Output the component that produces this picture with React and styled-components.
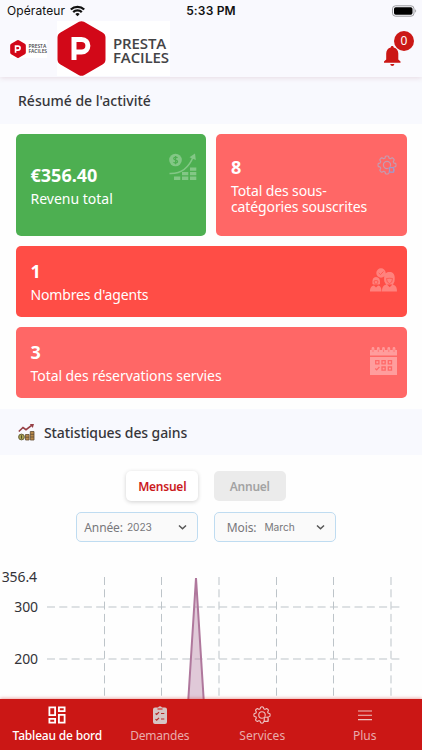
import React from 'react';
import styled, { createGlobalStyle } from 'styled-components';

const GlobalStyle = createGlobalStyle`
  *, *::before, *::after { box-sizing: border-box; }
  html, body { margin: 0; padding: 0; background: #fff; overflow: hidden; }
  body { font-family: "Noto Sans", sans-serif; color: #36363a; }
  svg { display: block; flex: none; }
`;

const Screen = styled.div`
  display: flex;
  flex-direction: column;
  width: 422px;
  height: 750px;
  overflow: hidden;
  background: #fefefe;
`;

const Header = styled.header`
  flex: none;
  height: 77px;
  background: #f9f9fe;
  box-shadow: 0 1px 5px rgba(150, 60, 80, 0.16);
  z-index: 1;
`;

const StatusBar = styled.div`
  display: grid;
  grid-template-columns: 1fr auto 1fr;
  align-items: center;
  height: 21px;
  padding: 0 7px;
  font-family: Inter, sans-serif;
  font-size: 12px;
  line-height: 21px;
  color: #111;
`;

const Carrier = styled.div`
  display: flex;
  align-items: center;
  gap: 5px;
  letter-spacing: 0.1px;
`;

const Clock = styled.div`
  font-weight: 600;
  letter-spacing: 0.17px;
`;

const BatteryWrap = styled.div`
  display: flex;
  justify-content: flex-end;
  margin-right: -2px;
`;

const BrandBar = styled.div`
  display: flex;
  align-items: center;
  height: 55px;
  padding: 0 7px 0 10px;
`;

const LogoTile = styled.div`
  display: flex;
  align-items: center;
  background: #fff;
  flex: none;
  width: ${(p) => (p.$small ? 37 : 113)}px;
  height: ${(p) => (p.$small ? 18 : 55)}px;
  margin-left: ${(p) => (p.$small ? 0 : 10)}px;
  gap: ${(p) => (p.$small ? 2.5 : 7)}px;
`;

const LogoWords = styled.div`
  font-family: "Open Sans", sans-serif;
  font-weight: 600;
  font-size: ${(p) => (p.$small ? 5 : 15)}px;
  line-height: ${(p) => (p.$small ? 4.5 : 14)}px;
  letter-spacing: ${(p) => (p.$small ? -0.05 : -0.13)}px;
  color: #444446;
  margin-top: ${(p) => (p.$small ? 0 : 3)}px;
`;

const BellButton = styled.button`
  position: relative;
  margin-left: auto;
  width: 32px;
  height: 36px;
  padding: 14px 0 0 1px;
  border: 0;
  background: none;
`;

const BellBadge = styled.span`
  position: absolute;
  top: 0;
  right: 1px;
  width: 20px;
  height: 20px;
  border-radius: 50%;
  background: #cb1816;
  color: #fff;
  font: 400 12px/20px "Noto Sans", sans-serif;
  text-align: center;
`;

const SectionTitle = styled.h2`
  flex: none;
  display: flex;
  align-items: center;
  gap: ${(p) => p.$gap || 0}px;
  height: ${(p) => p.$height}px;
  margin: 0;
  padding: 0 18px ${(p) => p.$lift || 0}px;
  background: #f8f9fe;
  font-size: 14px;
  font-weight: 500;
  letter-spacing: ${(p) => p.$tracking || 0}px;
`;

const CardGrid = styled.section`
  flex: none;
  display: grid;
  grid-template-columns: 1fr 1fr;
  grid-template-rows: 102px 71px 71px;
  gap: 10px;
  padding: 10px 15.5px 11px;
`;

const Card = styled.article`
  display: flex;
  justify-content: space-between;
  align-items: ${(p) => (p.$wide ? 'center' : 'flex-start')};
  grid-column: ${(p) => (p.$wide ? 'span 2' : 'auto')};
  padding: 0 9px 0 15px;
  border-radius: 5px;
  background: ${(p) => p.$color};
  color: #fff;
`;

const CardText = styled.div`
  align-self: center;
`;

const CardValue = styled.div`
  font-size: 18px;
  font-weight: 700;
  line-height: 24px;
  margin-bottom: 4px;
`;

const CardLabel = styled.div`
  font-size: 14px;
  line-height: 16.5px;
  letter-spacing: ${(p) => p.$tracking || 0}px;
  white-space: pre-line;
`;

const CardIcon = styled.div`
  padding: ${(p) => p.$pad};
`;

const Controls = styled.div`
  flex: none;
  display: grid;
  grid-template-columns: 122px 122px;
  justify-content: center;
  column-gap: 15.5px;
  row-gap: 11px;
  padding: 16px 10px 0 0;
`;

const Toggle = styled.button`
  width: 72px;
  height: 30px;
  padding: 0;
  border: 0;
  border-radius: 5px;
  justify-self: ${(p) => (p.$active ? 'end' : 'start')};
  background: ${(p) => (p.$active ? '#fff' : '#ebebeb')};
  box-shadow: ${(p) => (p.$active ? '0 1px 4px rgba(0, 0, 0, 0.18)' : 'none')};
  color: ${(p) => (p.$active ? '#cb1a1d' : '#a3a3a3')};
  font: 600 12px "Noto Sans", sans-serif;
  letter-spacing: -0.24px;
`;

const Select = styled.div`
  display: flex;
  align-items: center;
  height: 30px;
  padding: 0 10px 0 ${(p) => p.$left}px;
  border: 1px solid #bfdcf1;
  border-radius: 5px;
  background: #fafafa;
  color: #77777a;
  font-size: 12px;
  letter-spacing: -0.1px;

  svg { margin-left: auto; }
`;

const SelectValue = styled.span`
  margin-left: ${(p) => p.$gap}px;
  font: 400 10.2px Inter, sans-serif;
  letter-spacing: -0.05px;
`;

const ChartArea = styled.div`
  flex: none;
  display: grid;
  grid-template-columns: 47px 1fr;
  height: 157px;
  overflow: hidden;
`;

const AxisLabels = styled.div`
  display: flex;
  flex-direction: column;
  align-items: flex-end;
  padding: 25px 9px 0 0;
  font-size: 14px;
  color: #333338;
`;

const AxisLabel = styled.span`
  height: ${(p) => p.$step}px;
  line-height: 20px;
  letter-spacing: -0.1px;
  margin-right: ${(p) => p.$shift || 0}px;
`;

const Nav = styled.nav`
  flex: none;
  display: grid;
  grid-template-columns: repeat(4, 1fr);
  height: 51px;
  padding: 0 6px;
  background: #cb1715;
  box-shadow: 0 -1px 3px rgba(203, 23, 21, 0.35);
  z-index: 1;
`;

const NavItem = styled.a`
  display: flex;
  flex-direction: column;
  align-items: center;
  color: ${(p) => (p.$active ? '#fff' : '#e9acab')};
  font-size: 12px;
  font-weight: ${(p) => (p.$active ? 500 : 400)};
  letter-spacing: ${(p) => p.$tracking || 0}px;
  line-height: 18px;
  white-space: nowrap;
`;

const NavGlyph = styled.div`
  display: flex;
  align-items: center;
  height: 20px;
  margin: 6px 0 2px;
`;

const Hexagon = ({ width, height }) => (
  <svg width={width} height={height} viewBox="0 0 49 55">
    <path d="M22 .8q2.500-1.300 5 0l18.500 10.700q3 1.700 3 5v22q0 3.300-3 5L27 54.200q-2.500 1.300-5 0L3.500 43.500q-3-1.700-3-5v-22q0-3.300 3-5z" fill="#d20818" />
    <path d="M17 39v-20.500h7.500c8.500 0 8.500 12.500 0 12.500h-7.500" fill="none" stroke="#fff" strokeWidth="5" />
  </svg>
);

const Wifi = () => (
  <svg width="15" height="12" viewBox="0 0 15 12" fill="none" stroke="#111" strokeWidth="2.300">
    <path d="M.8 4.500a9.600 9.600 0 0 1 13.400 0M3.200 7.200a6.200 6.200 0 0 1 8.600 0" />
    <path d="M7.500 11.300 5.300 9.100a3.200 3.200 0 0 1 4.400 0z" fill="#111" stroke="none" />
  </svg>
);

const Battery = () => (
  <svg width="25" height="12" viewBox="0 0 25 12">
    <rect x=".5" y=".8" width="21.500" height="10.400" rx="3" fill="none" stroke="#9b9b9f" />
    <rect x="2" y="2.200" width="18.500" height="7.600" rx="1.700" fill="#000" />
    <path d="M23.200 4.300q2 1.700 0 3.400z" fill="#9b9b9f" />
  </svg>
);

const Bell = () => (
  <svg width="17" height="20" viewBox="0 0 17 20" fill="#cb1715">
    <path d="M8.200 0c1 0 1.500.6 1.500 1.600 3 .8 4.600 3 4.600 6v6l2.200 2v1.200H0v-1.200l2.200-2v-6c0-3 1.500-5.200 4.500-6C6.700.6 7.200 0 8.200 0zM6.200 17.900h4.200q-.3 2.100-2.100 2.100t-2.100-2.100z" />
  </svg>
);

/* Eight rounded teeth traced around the hub, with a small box at the lower right. */
const GEAR_OUTLINE = Array.from({ length: 96 }, (_, i) => {
  const angle = (i / 96) * Math.PI * 2;
  const radius = 9.6 + 1.25 * Math.tanh(2.2 * Math.cos(8 * angle) + 0.5);
  return `${(12 + radius * Math.cos(angle)).toFixed(2)} ${(12 + radius * Math.sin(angle)).toFixed(2)}`;
}).join('L');

const Gear = ({ size, color, boxColor }) => {
  const id = `gear-${size}`;
  return (
    <svg width={size} height={size} viewBox="0 0 24 24" fill="none" stroke={color} strokeWidth="1.500" strokeLinejoin="round">
      <mask id={id}>
        <rect width="24" height="24" fill="#fff" />
        <rect x="13.500" y="13.500" width="7.500" height="7.500" fill="#000" />
      </mask>
      <g mask={`url(#${id})`}>
        <path d={`M${GEAR_OUTLINE}Z`} />
        <circle cx="12" cy="12" r="4.300" />
      </g>
      <rect x="15" y="15" width="5" height="5.500" stroke={boxColor} />
    </svg>
  );
};

const Revenue = () => (
  <svg width="28" height="28" viewBox="0 0 28 28" opacity=".3" fill="#fff">
    <circle cx="6.500" cy="7" r="6.300" />
    <path d="M8.500 4.800C7.600 3.700 4.700 4 4.700 5.600c0 1.900 3.900 1.100 3.900 3 0 1.700-3 1.900-4.100.6M6.600 3v8.200" fill="none" stroke="#4daf51" strokeWidth="1.200" />
    <path d="M.5 20.500C12 21 20 14.500 24.300 3.500" fill="none" stroke="#fff" strokeWidth="1.500" />
    <path d="M20.500 4.200 26 .5l.8 6.500z" />
    <path d="M5 23.500h6.300v3.500H5zM13 23.500h6.300v3.500H13zM13 19h6.300v3.300H13zM21 23.500h6.300v3.500H21zM21 19h6.300v3.300H21zM21 14.500h6.300v3.300H21z" />
  </svg>
);

const People = () => (
  <svg width="27" height="24" viewBox="0 0 27 24">
    <g opacity=".3">
      <path d="M11 .3a4.700 4.700 0 1 1 0 9.400 4.700 4.700 0 0 1 0-9.400zM2.500 16q-.8-7 3.500-7.100 4.700 0 4 7.100l-1 .5H3.500zM0 23.500c0-4 1.500-5.600 4-6l2 2 2.100-2c2.300.5 3.300 2 3.400 6zM14.300 13.500C13.500 6.500 15.500 4 19.500 4s6 2.500 5 9.500l-1.500 3h-7zM12 23.500c0-5 2-6.600 5-7l2.700 2.700 2.700-2.700c3 .6 4.600 2.200 4.600 7z" fill="#fff" />
    </g>
    <path d="m8.700 4.900 1.800 1.700 3-3.200M4 13q2-1 4 0 0 3-2 3.200Q4 16 4 13zM16.500 10.500q3.500-.5 6 0 0 4.500-3 5-3-.5-3-5z" fill="none" stroke="#ff5149" strokeWidth="1" opacity=".75" />
  </svg>
);

const Calendar = () => (
  <svg width="27" height="28" viewBox="0 0 27 28">
    <path d="M0 3h27v5.500H0zM0 10h27v18H0z" fill="#fff" opacity=".36" />
    <path d="M3 5V1.500M8.300 5V1.500M13.500 5V1.500M18.800 5V1.500M24 5V1.500" stroke="#ff9b9b" strokeWidth="2.800" strokeLinecap="round" />
    <path d="M3 5V2.500M8.300 5V2.500M13.500 5V2.500M18.800 5V2.500M24 5V2.500" stroke="#ff7878" strokeWidth="1" />
    <path d="M5.700 13.700h3.200v3.200H5.700zM12 13.700h3.200v3.200H12zM18.300 13.700h3.200v3.200h-3.200zM12 20h3.200v3.200H12zM18.300 20h3.200v3.200h-3.200zM5.300 21.500l1.400 1.400 2.700-3" fill="none" stroke="#ff6867" strokeWidth="1.300" />
  </svg>
);

const Gains = () => (
  <svg width="17" height="17" viewBox="0 0 17 17">
    <path d="M.8 7.500 5 3.500l3 2.200 6-4.600" fill="none" stroke="#963f45" strokeWidth="1.600" />
    <path d="m11.800 0 4.200 0-1.200 4z" fill="#963f45" />
    <path d="M12.300 7.500h3.700v8.500h-3.700zM7.500 10.500h3.600V16H7.500z" fill="#b98a4b" stroke="#5f4c33" strokeWidth=".8" />
    <path d="M12.300 10.300H16M12.300 13H16M7.500 13.200h3.600" stroke="#5f4c33" strokeWidth=".8" />
    <circle cx="3.500" cy="13" r="2.900" fill="#aaa553" stroke="#5f5937" strokeWidth=".9" />
    <path d="M3.500 11.300v3.400" stroke="#4e4a30" />
  </svg>
);

const Chevron = () => (
  <svg width="9" height="7" viewBox="0 0 9 7" fill="none" stroke="#555" strokeWidth="1.500">
    <path d="m1 1.500 3.500 3.300L8 1.500" />
  </svg>
);

const Dashboard = () => (
  <svg width="18" height="18" viewBox="0 0 18 18" fill="none" stroke="#fff" strokeWidth="1.800">
    <path d="M1.400 1.400h5.700v7.700H1.400zM10.900 1.400h5.700v3.700h-5.700zM10.900 8.900h5.700v7.700h-5.700zM1.400 12.900h5.700v3.700H1.400z" />
  </svg>
);

const Clipboard = () => (
  <svg width="14" height="18" viewBox="0 0 14 18">
    <path d="M2 1.500h3Q7-.8 9 1.500h3q2 0 2 2V16q0 2-2 2H2q-2 0-2-2V3.500q0-2 2-2z" fill="#d6c5c5" />
    <path d="M4.500 3h5" stroke="#cb1715" strokeWidth="1" />
    <path d="m2.500 7.500 1.200 1L6 6.200m-3.500 6.900 1.200 1L6 11.800M8 7.500h3.300M8 13h3.300" fill="none" stroke="#b62a29" strokeWidth="1.200" />
  </svg>
);

const Menu = () => (
  <svg width="14" height="11" viewBox="0 0 14 11" stroke="#edc2c1" strokeWidth="1.100">
    <path d="M0 1h14M0 5.300h14M0 9.600h14" />
  </svg>
);

const GRID_X = [57.5, 114.5, 172, 229.5, 286.5, 344];

const GainsChart = () => (
  <svg width="375" height="157" viewBox="0 0 375 157">
    <g stroke="#bdc4c9" strokeWidth="1" strokeDasharray="8 4.300" fill="none">
      {GRID_X.map((x) => <path key={x} d={`M${x} 35v240`} />)}
      <path d="M0 65h355M0 117h355" />
    </g>
    <path d="M149 36 138 210h22z" fill="#b47ba0" fillOpacity=".4" stroke="#af779c" strokeWidth="2" />
  </svg>
);

export default function App() {
  return (
    <>
      <GlobalStyle />
      <Screen>
        <Header>
          <StatusBar>
            <Carrier>Opérateur <Wifi /></Carrier>
            <Clock>5:33 PM</Clock>
            <BatteryWrap><Battery /></BatteryWrap>
          </StatusBar>
          <BrandBar>
            <LogoTile $small>
              <Hexagon width={16} height={18} />
              <LogoWords $small>PRESTA<br />FACILES</LogoWords>
            </LogoTile>
            <LogoTile>
              <Hexagon width={49} height={55} />
              <LogoWords>PRESTA<br />FACILES</LogoWords>
            </LogoTile>
            <BellButton aria-label="Notifications">
              <Bell />
              <BellBadge>0</BellBadge>
            </BellButton>
          </BrandBar>
        </Header>

        <SectionTitle $height={47} $lift={1}>Résumé de l'activité</SectionTitle>
        <CardGrid>
          <Card $color="#4daf51">
            <CardText>
              <CardValue>€356.40</CardValue>
              <CardLabel>Revenu total</CardLabel>
            </CardText>
            <CardIcon $pad="19px 0 0"><Revenue /></CardIcon>
          </Card>
          <Card $color="#ff6766">
            <CardText>
              <CardValue>8</CardValue>
              <CardLabel $tracking={-0.12}>{'Total des sous-\ncatégories souscrites'}</CardLabel>
            </CardText>
            <CardIcon $pad="21px 1px 0 0"><Gear size={20} color="#c59bb0" boxColor="#9d9bd0" /></CardIcon>
          </Card>
          <Card $wide $color="#ff4d46">
            <CardText>
              <CardValue>1</CardValue>
              <CardLabel $tracking={-0.17}>Nombres d'agents</CardLabel>
            </CardText>
            <CardIcon $pad="0 1px 4px 0"><People /></CardIcon>
          </Card>
          <Card $wide $color="#ff6766">
            <CardText>
              <CardValue>3</CardValue>
              <CardLabel $tracking={-0.06}>Total des réservations servies</CardLabel>
            </CardText>
            <CardIcon $pad="0 1px 4px 0"><Calendar /></CardIcon>
          </Card>
        </CardGrid>

        <SectionTitle $height={46} $gap={9} $tracking={-0.1}>
          <Gains />
          Statistiques des gains
        </SectionTitle>
        <Controls>
          <Toggle $active>Mensuel</Toggle>
          <Toggle>Annuel</Toggle>
          <Select $left={7}>Année:<SelectValue $gap={4}>2023</SelectValue><Chevron /></Select>
          <Select $left={12}>Mois:<SelectValue $gap={8}>March</SelectValue><Chevron /></Select>
        </Controls>
        <ChartArea>
          <AxisLabels>
            <AxisLabel $step={30} $shift={1}>356.4</AxisLabel>
            <AxisLabel $step={52}>300</AxisLabel>
            <AxisLabel $step={52}>200</AxisLabel>
          </AxisLabels>
          <GainsChart />
        </ChartArea>

        <Nav>
          <NavItem $active $tracking={-0.19}><NavGlyph><Dashboard /></NavGlyph>Tableau de bord</NavItem>
          <NavItem $tracking={-0.2}><NavGlyph><Clipboard /></NavGlyph>Demandes</NavItem>
          <NavItem><NavGlyph><Gear size={18} color="#edc2c1" boxColor="#edc2c1" /></NavGlyph>Services</NavItem>
          <NavItem><NavGlyph><Menu /></NavGlyph>Plus</NavItem>
        </Nav>
      </Screen>
    </>
  );
}
